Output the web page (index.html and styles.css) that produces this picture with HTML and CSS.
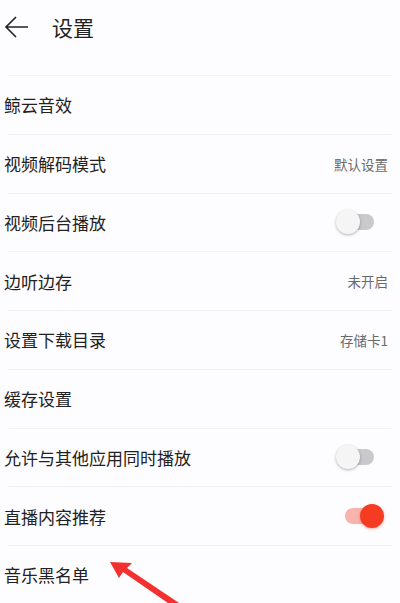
FILE: index.html
```html
<!DOCTYPE html>
<html lang="zh-CN">
<head>
  <meta charset="utf-8">
  <title>设置</title>
  <link rel="stylesheet" href="styles.css">
</head>
<body>
  <header class="topbar">
    <svg class="back" width="26" height="24" viewBox="0 0 26 24">
      <path d="M24 12H2M12 2L2 12l10 10" fill="none" stroke="#222" stroke-width="1.6"/>
    </svg>
    <h1>设置</h1>
  </header>
  <ul class="settings">
    <li><span>鲸云音效</span></li>
    <li><span>视频解码模式</span><span class="value">默认设置</span></li>
    <li><span>视频后台播放</span><span class="switch"></span></li>
    <li><span>边听边存</span><span class="value">未开启</span></li>
    <li><span>设置下载目录</span><span class="value">存储卡1</span></li>
    <li><span>缓存设置</span></li>
    <li><span>允许与其他应用同时播放</span><span class="switch"></span></li>
    <li><span>直播内容推荐</span><span class="switch on"></span></li>
    <li><span>音乐黑名单</span></li>
  </ul>
  <svg class="pointer" width="80" height="50" viewBox="0 0 80 50">
    <path d="M0 0L22 1L17 6L78 47L71 50L13 10L9 16Z" fill="#f23030"/>
  </svg>
</body>
</html>
```

FILE: styles.css
```css
body {
  margin: 0;
  background: #fdfcfe;
  font-family: "Noto Sans CJK SC", "Noto Sans", sans-serif;
  color: #222;
  overflow: hidden;
  height: 603px;
  position: relative;
}
.topbar {
  height: 76px;
  box-sizing: border-box;
  display: flex;
  align-items: center;
  margin: 0 8px;
  padding-bottom: 2px;
  border-bottom: 1px solid #f0eff3;
}
.back {
  margin: -20px 0 0 -4px;
}
.topbar h1 {
  font-size: 21px;
  font-weight: normal;
  margin: -20px 0 0 22px;
}
.settings {
  list-style: none;
  margin: 0;
  padding: 0;
}
.settings li {
  height: 58.75px;
  box-sizing: border-box;
  border-bottom: 1px solid #f0eff3;
  margin: 0 8px;
  padding: 0 4px 0 0;
  display: flex;
  align-items: center;
  justify-content: space-between;
  font-size: 17px;
}
.settings li > span:first-child {
  margin-left: -4px;
}
.value {
  font-size: 13.5px;
  color: #6a6a6a;
}
.switch {
  position: relative;
  width: 38px;
  height: 16px;
  margin-right: 14px;
}
.switch::before {
  content: "";
  position: absolute;
  left: 10px;
  top: 0;
  width: 28px;
  height: 16px;
  border-radius: 8px;
  background: #c9c9cb;
}
.switch::after {
  content: "";
  position: absolute;
  left: 0;
  top: -4px;
  width: 24px;
  height: 24px;
  border-radius: 50%;
  background: #f5f5f5;
  box-shadow: 0 1px 3px rgba(0, 0, 0, 0.3);
}
.switch.on::before {
  left: 9px;
  width: 26px;
  background: #f8b4ac;
}
.switch.on::after {
  left: 24px;
  background: #f53b22;
  box-shadow: 0 1px 3px rgba(200, 30, 10, 0.35);
}
.pointer {
  position: absolute;
  left: 110px;
  top: 562px;
}
```
